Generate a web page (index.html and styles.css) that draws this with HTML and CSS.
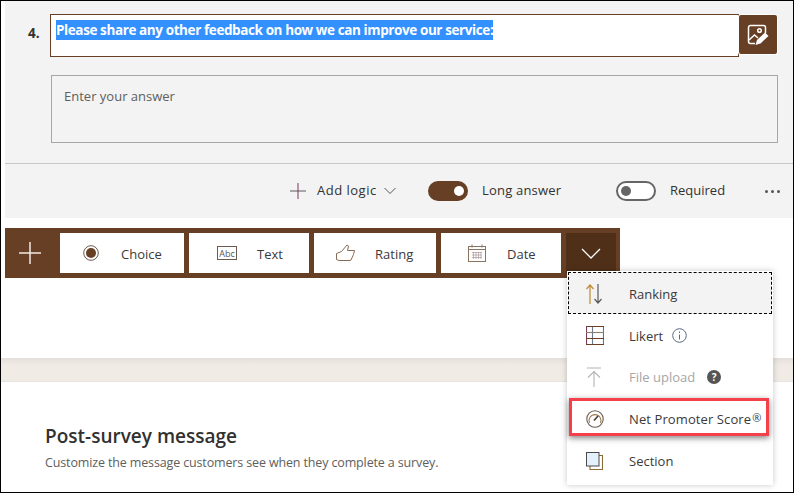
FILE: index.html
```html
<!DOCTYPE html>
<html lang="en">
<head>
    <meta charset="UTF-8">
    <title>Survey question</title>
    <link rel="stylesheet" href="styles.css">
</head>
<body>
    <div class="frame">
        <section class="question">
            <div class="title-row">
                <span class="number">4.</span>
                <div class="title-input"><span class="selected">Please share any other feedback on how we can improve our service:</span></div>
                <button class="image-btn">
                    <svg width="24" height="24" viewBox="0 0 24 24" fill="none" stroke="#fff" stroke-width="1.5">
                        <path d="M9 20.500H4.500A2 2 0 0 1 2.500 18.500V4.500A2 2 0 0 1 4.500 2.500h13A2 2 0 0 1 19.500 4.500V10"/>
                        <circle cx="13.500" cy="7.500" r="1.800"/>
                        <path d="M3 17l5.500-5 3.500 3"/>
                        <path d="M9.500 22l1.500-5 8-7.500 3.500 3.500-8 7.500z" fill="#fff" stroke="none"/>
                    </svg>
                </button>
            </div>
            <div class="answer">Enter your answer</div>
            <div class="divider"></div>
            <div class="options">
                <span class="add-logic">
                    <svg width="16" height="16" viewBox="0 0 16 16"><path d="M0 8h16" stroke="#5a5a5a"/><path d="M8 0v16" stroke="#7a3a5e"/></svg>
                    <span class="logic-text">Add logic</span>
                    <svg class="caret" width="12" height="8" viewBox="0 0 12 8" fill="none"><path d="M.5 1l5.500 5.500L11.500 1" stroke="#555" stroke-width="1"/></svg>
                </span>
                <span class="toggle toggle-on"><i></i></span>
                <span class="toggle-label long">Long answer</span>
                <span class="toggle toggle-off"><i></i></span>
                <span class="toggle-label required">Required</span>
                <span class="more"><i></i><i></i><i></i></span>
            </div>
        </section>

        <div class="toolbar">
            <div class="plus">
                <svg width="22" height="22" viewBox="0 0 22 22"><path d="M11 0v22M0 11h22" stroke="#f4ebe2" stroke-width="1.500"/></svg>
            </div>
            <div class="tool tool-choice">
                <svg width="16" height="16" viewBox="0 0 16 16"><circle cx="8" cy="8" r="7.300" fill="none" stroke="#6b5a50" stroke-width="1"/><circle cx="8" cy="8" r="5" fill="#673f24"/></svg>
                <span>Choice</span>
            </div>
            <div class="tool tool-text">
                <svg width="20" height="14" viewBox="0 0 20 14"><rect x=".5" y=".5" width="19" height="13" fill="none" stroke="#6b5a50"/><text x="10" y="10.500" text-anchor="middle" class="abc">Abc</text></svg>
                <span>Text</span>
            </div>
            <div class="tool tool-rating">
                <svg width="20" height="18" viewBox="0 0 20 18" fill="none" stroke="#8a6a55" stroke-width="1"><path d="M.5 9.500l5-2 5.500-6.500 1.500 1-1 4.500h7l-1 4-2.500 5.500-1 .5H3l-2.500-1z"/></svg>
                <span>Rating</span>
            </div>
            <div class="tool tool-date">
                <svg width="18" height="18" viewBox="0 0 18 18" fill="none" stroke="#8a7460"><rect x=".5" y="2.500" width="17" height="15"/><path d="M.5 5.500h17M4 .5v3M14 .5v3"/><path d="M4 8.500h10M4 11h10M4 13.500h10M5.500 8v7M8 8v7M10.500 8v7M13 8v7" stroke-width=".7" stroke="#a99"/></svg>
                <span>Date</span>
            </div>
            <div class="expand">
                <svg width="20" height="11" viewBox="0 0 20 11" fill="none"><path d="M1 1l9 9 9-9" stroke="#fff" stroke-width="1.300"/></svg>
            </div>
        </div>

        <div class="band"></div>

        <section class="post">
            <h2>Post-survey message</h2>
            <p>Customize the message customers see when they complete a survey.</p>
        </section>

        <ul class="menu">
            <li class="item item-focus">
                <svg width="16" height="20" viewBox="0 0 16 20" fill="none" stroke-width="1.200"><path d="M4 20V1M.5 5L4 1l3.500 4" stroke="#c08a30"/><path d="M12 0v19M8.500 15l3.500 4 3.500-4" stroke="#5a5a5a"/></svg>
                <span>Ranking</span>
            </li>
            <li class="item">
                <svg width="18" height="19" viewBox="0 0 18 19" fill="none" stroke-width="1.100"><path d="M.5 0v19" stroke="#7a3b5a"/><path d="M17.500 0v19" stroke="#3a7ac0"/><path d="M6.500 0v19" stroke="#6b7a90"/><path d="M0 .5h18M0 12.500h18M0 18.500h18" stroke="#6b3f24"/><path d="M0 6.500h18" stroke="#8a8070"/></svg>
                <span>Likert</span>
                <svg class="hint" width="15" height="15" viewBox="0 0 15 15" fill="none"><circle cx="7.500" cy="7.500" r="6.800" stroke="#5a6a80"/><path d="M7.500 6.500v5M7.500 3.500v1.500" stroke="#5a6a80"/></svg>
            </li>
            <li class="item item-disabled">
                <svg width="16" height="20" viewBox="0 0 16 20" fill="none" stroke="#b4b4b4" stroke-width="1.100"><path d="M1 1h14M8 20V5M2 10.500L8 4.500l6 6"/></svg>
                <span>File upload</span>
                <b class="help">?</b>
            </li>
            <li class="item item-marked">
                <svg width="18" height="18" viewBox="0 0 18 18" fill="none" stroke="#6b5a50" stroke-width="1.100"><circle cx="9" cy="9" r="8.200"/><path d="M3.500 13A6 6 0 1 1 14.500 13" stroke="#9a7a50"/><path d="M8 10.500l4-4.500" stroke-width="1.600" stroke="#4a3a30"/></svg>
                <span>Net Promoter Score<em class="reg">®</em></span>
            </li>
            <li class="item item-section">
                <svg width="17" height="18" viewBox="0 0 17 18" fill="none"><path d="M13 3.500h3.500v14H4V14" stroke="#8a6a35" stroke-width="1.100"/><rect x=".5" y=".5" width="12.500" height="13.500" fill="#e4f0fb" stroke="#4a4a4a"/></svg>
                <span>Section</span>
            </li>
        </ul>
    </div>
</body>
</html>
```

FILE: styles.css
```css
* {
    box-sizing: border-box;
}

body {
    margin: 0;
    font-family: "Open Sans", "Noto Sans", sans-serif;
    color: #323130;
    background: white;
}

.frame {
    position: relative;
    width: 794px;
    height: 493px;
    padding-left: 4px;
    border: 1px solid #000;
    overflow: hidden;
}

/* question card */
.question {
    height: 217px;
    background: #f3f3f3;
    padding-top: 13px;
}

.title-row {
    display: flex;
    align-items: flex-start;
}

.number {
    width: 45px;
    padding: 10px 0 0 23px;
    font-size: 13.500px;
    font-weight: 700;
}

.title-input {
    width: 689px;
    height: 43px;
    background: white;
    border: 1px solid #673f24;
    padding: 5px;
    font-size: 13.500px;
    font-weight: 700;
    line-height: 20px;
}

.selected {
    display: inline-block;
    background: #3390ff;
    color: white;
    white-space: nowrap;
    letter-spacing: -0.4px;
}

.image-btn {
    width: 38px;
    height: 39px;
    margin-top: 1px;
    padding: 0;
    background: #673f24;
    border: none;
    border-radius: 2px;
    box-shadow: 0 0 0 1px white;
    display: flex;
    align-items: center;
    justify-content: center;
}

.answer {
    width: 727px;
    height: 68px;
    margin: 18px 0 0 46px;
    padding: 10px 12px;
    border: 1px solid #a6a6a6;
    font-size: 13px;
    line-height: 20px;
    color: #605e5c;
}

.divider {
    height: 1px;
    margin-top: 20px;
    background: #c8c8c8;
}

.options {
    display: flex;
    align-items: center;
    height: 54px;
    padding-left: 285px;
    font-size: 13px;
}

.options > * {
    flex-shrink: 0;
}

.add-logic {
    display: flex;
    align-items: center;
    width: 138px;
}

.add-logic svg:first-child {
    margin-right: 11px;
}

.logic-text {
    letter-spacing: 0.5px;
    margin-bottom: 2px;
}

.caret {
    margin-left: 7px;
}

.toggle {
    display: flex;
    align-items: center;
    width: 40px;
    height: 20px;
    border-radius: 10px;
    padding: 0 4px;
}

.toggle i {
    width: 10px;
    height: 10px;
    border-radius: 50%;
}

.toggle-on {
    background: #673f24;
    justify-content: flex-end;
}

.toggle-on i {
    background: white;
}

.toggle-off {
    background: white;
    border: 2px solid #666;
    padding: 0 3px;
}

.toggle-off i {
    background: #666;
}

.toggle-label {
    margin-left: 14px;
    margin-bottom: 2px;
}

.long {
    width: 134px;
    letter-spacing: 0.2px;
}

.required {
    width: 95px;
}

.more {
    display: flex;
    gap: 3px;
}

.more i {
    width: 3px;
    height: 3px;
    border-radius: 50%;
    background: #555;
}

/* add question toolbar */
.toolbar {
    display: flex;
    width: 615px;
    height: 50px;
    margin-top: 10px;
    padding: 5px 4px 5px 0;
    gap: 5px;
    background: #673f24;
}

.plus {
    width: 50px;
    display: flex;
    align-items: center;
    justify-content: center;
}

.tool {
    display: flex;
    align-items: center;
    background: white;
    font-size: 13px;
    color: #3b3a39;
}

.tool span {
    padding-top: 2px;
}

.tool-choice {
    width: 124px;
    padding-left: 23px;
    gap: 22px;
}

.tool-text {
    width: 120px;
    padding-left: 28px;
    gap: 20px;
}

.tool-rating {
    width: 122px;
    padding-left: 22px;
    gap: 19px;
}

.tool-date {
    width: 120px;
    padding-left: 27px;
    gap: 21px;
}

.abc {
    font-size: 9px;
    fill: #555;
}

.expand {
    width: 50px;
    display: flex;
    align-items: center;
    justify-content: center;
    background: #4f2f18;
}

.band {
    height: 24px;
    margin: 80px 0 0 -4px;
    background: linear-gradient(#e4dfda, #f1ebe6 7px);
    border-bottom: 1px solid #e8e4e0;
}

.post {
    padding: 41px 0 0 40px;
}

.post h2 {
    margin: 0;
    font-size: 19px;
    font-weight: 600;
    line-height: 26px;
}

.post p {
    margin: 5px 0 0;
    font-size: 12.500px;
    line-height: 18px;
    letter-spacing: -0.14px;
    color: #605e5c;
}

/* insert menu */
.menu {
    position: absolute;
    left: 566px;
    top: 270px;
    width: 206px;
    height: 214px;
    margin: 0;
    padding: 1px;
    list-style: none;
    background: white;
    box-shadow: 0 0 6px rgba(0, 0, 0, 0.22);
}

.item {
    position: relative;
    display: flex;
    align-items: center;
    height: 42px;
    padding-top: 1px;
    font-size: 13px;
    color: #3b3a39;
}

.item > svg:first-child {
    position: absolute;
    left: 18px;
}

.item > span {
    margin-left: 61px;
}

.item-focus {
    background: #f3f3f3;
    outline: 1px dashed #000;
    outline-offset: -1px;
}

.item-disabled {
    color: #a6a6a6;
    padding-top: 0;
    padding-bottom: 1px;
}

.item-section {
    padding-top: 0;
    padding-bottom: 1px;
}

.hint {
    margin-left: 9px;
}

.help {
    width: 14px;
    height: 14px;
    margin-left: 12px;
    border-radius: 50%;
    background: #555;
    color: white;
    font-size: 10px;
    line-height: 14px;
    text-align: center;
}

.item-marked {
    outline: 3px solid #f5404c;
    outline-offset: -3px;
    box-shadow: 0 2px 6px rgba(0, 0, 0, 0.5);
    z-index: 1;
    height: 38px;
    margin: 0 3px 4px 1px;
    padding-top: 4px;
}

.item-marked > svg:first-child {
    left: 17px;
}

.item-marked > span {
    margin-left: 60px;
    letter-spacing: 0.1px;
}

.reg {
    font-size: 11px;
    font-style: normal;
    vertical-align: 2px;
    margin-left: 1px;
}
```
